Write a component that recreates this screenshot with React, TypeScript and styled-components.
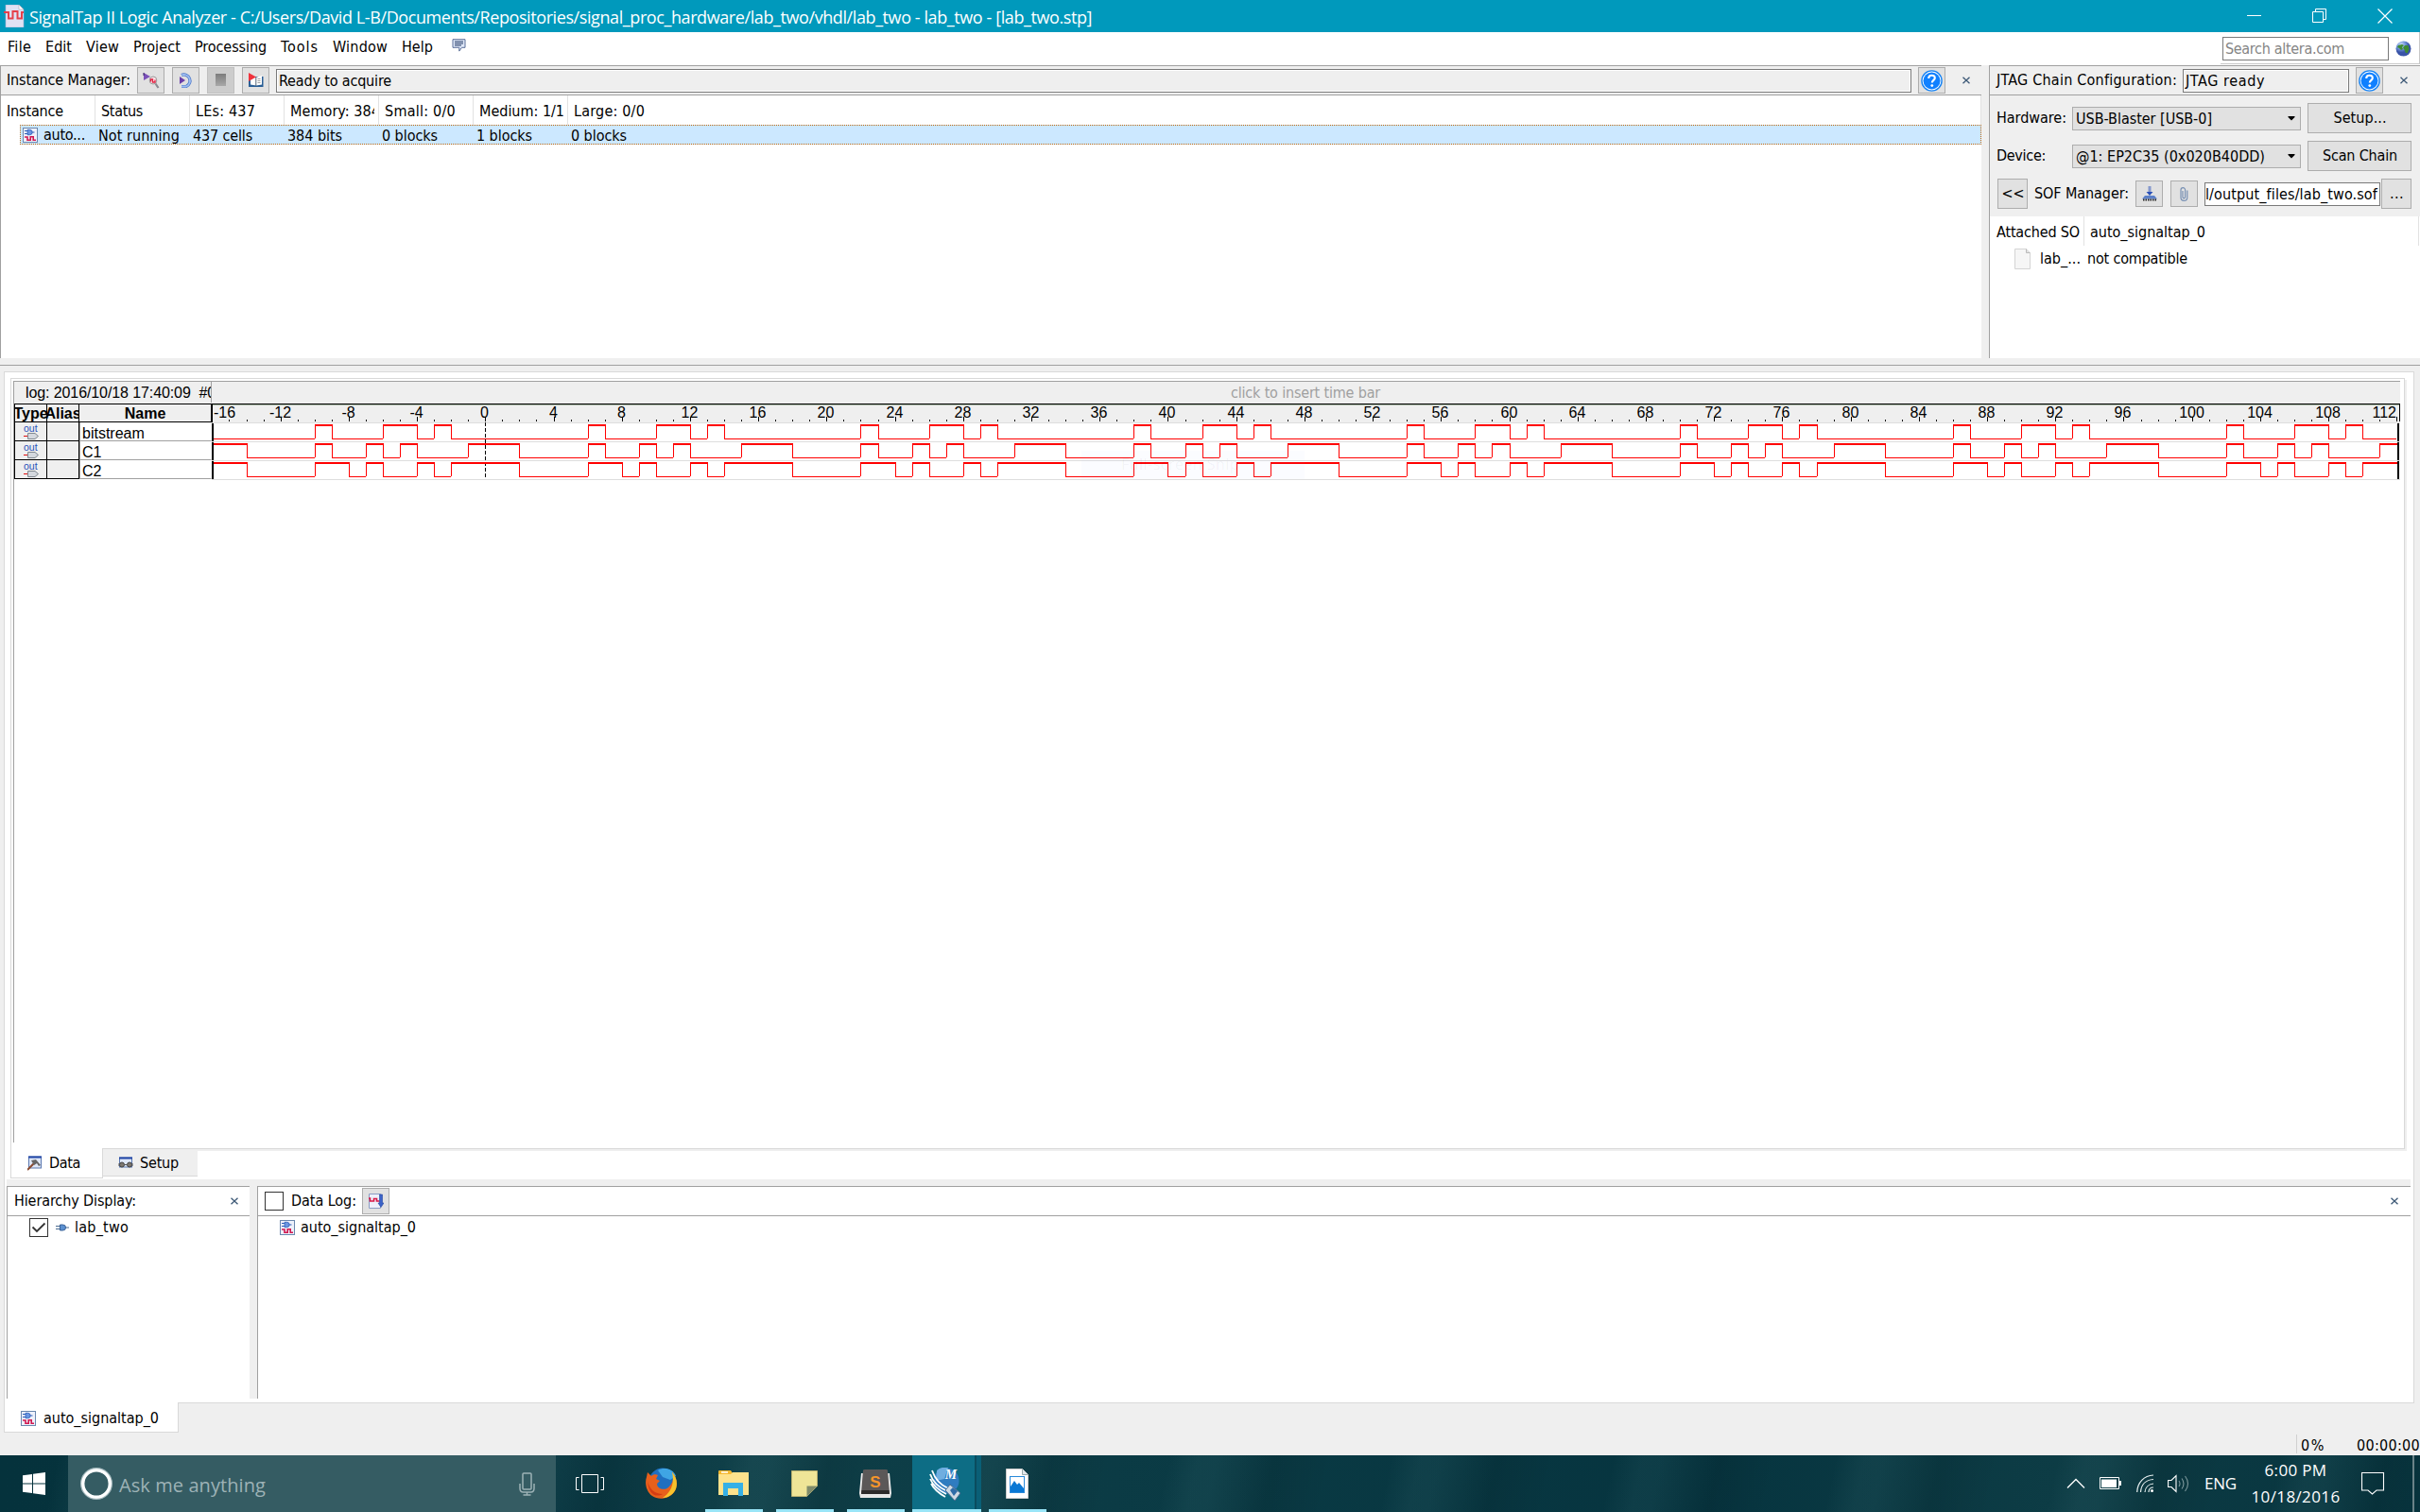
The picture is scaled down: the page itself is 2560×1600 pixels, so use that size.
import React, { useLayoutEffect, useRef, useState } from 'react';
import styled, { createGlobalStyle, css } from 'styled-components';

const ui = '"DejaVu Sans Condensed", "DejaVu Sans", sans-serif';
const segoe = '"Open Sans", "Noto Sans", sans-serif';
const arial = '"Liberation Sans", Arial, sans-serif';

const Global = createGlobalStyle`
  * { box-sizing: border-box; }
  body { margin: 0; overflow: hidden; background: #f0f0f0; }
  svg { display: block; flex: none; }
`;

const App = styled.div`
  width: 2560px; height: 1600px; display: flex; flex-direction: column;
  background: #efefef; color: #000; font: 16px/20px ${ui}; font-stretch: condensed;
  white-space: pre; overflow: hidden;
`;

/* ---------- text ---------- */
const TextSpan = styled.span<{ $w?: number; $font?: string; $size?: number; $color?: string }>`
  display: block; flex: none; line-height: 20px; white-space: pre;
  ${p => p.$w && css`width: ${p.$w}px;`}
  ${p => p.$font && css`font-family: ${p.$font}; font-stretch: normal;`}
  ${p => p.$size && css`font-size: ${p.$size}px;`}
  ${p => p.$color && css`color: ${p.$color};`}
`;

type LabelProps = { w?: number; font?: string; size?: number; color?: string; children: string };

/* A label whose tracking is spread so that the string fills the given width. */
function Label({ w, font, size, color, children }: LabelProps) {
  const inner = useRef<HTMLSpanElement>(null);
  const [track, setTrack] = useState(0);
  useLayoutEffect(() => {
    if (w && inner.current) {
      setTrack((w + 1 - inner.current.getBoundingClientRect().width) / children.length);
    }
  }, [w, children]);
  return (
    <TextSpan $w={w} $font={font} $size={size} $color={color}>
      <span ref={inner} style={{ letterSpacing: track }}>{children}</span>
    </TextSpan>
  );
}

/* ---------- title and menu ---------- */
const TitleBar = styled.header`
  height: 34px; flex: none; background: #0099bc; display: flex; align-items: center; padding: 0 29px 0 4px;
`;
const TitleText = styled.div`margin: 1px 0 0 5px; flex: 1;`;
const WindowButtons = styled.div`display: flex; gap: 54px; margin-top: -1px;`;
const MenuBar = styled.nav`
  height: 35px; flex: none; background: #fff; display: flex; align-items: flex-start; padding-left: 8px;
`;
const MenuItems = styled.div`display: flex; gap: 16px; padding-top: 6px; flex: 1;`;
const BubbleWrap = styled.div`padding-top: 1px; margin-left: 5px;`;
const SearchBar = styled.div`
  width: 211px; height: 34px; display: flex; align-items: center; gap: 7px; padding: 1px 0 0 2px;
  border-bottom: 1px solid #c8c8c8; border-right: 1px solid #c8c8c8;
`;
const SearchInput = styled.div`
  width: 176px; height: 25px; border: 1px solid #7a7a7a; display: flex; align-items: center; padding: 1px 0 0 2px;
`;

/* ---------- shared controls ---------- */
const Btn = styled.div<{ $w: number; $h: number; $dim?: boolean }>`
  width: ${p => p.$w}px; height: ${p => p.$h}px; flex: none; display: flex; align-items: center; justify-content: center;
  background: ${p => (p.$dim ? '#cccccc' : '#e1e1e1')}; border: 1px solid ${p => (p.$dim ? '#bfbfbf' : '#adadad')};
`;
const Field = styled.div<{ $w?: number; $white?: boolean }>`
  ${p => (p.$w ? css`width: ${p.$w}px; flex: none;` : css`flex: 1;`)}
  height: 25px; border: 1px solid #7a7a7a; display: flex; align-items: center; overflow: hidden;
  padding: 1px 0 0 ${p => (p.$white ? 0 : 2)}px;
  background: ${p => (p.$white ? '#fff' : '#efefef')}; box-shadow: inset 0 0 0 1px #fff;
`;
const Combo = styled.div`
  width: 242px; height: 25px; flex: none; background: #e1e1e1; border: 1px solid #adadad;
  display: flex; align-items: center; justify-content: space-between; padding: 1px 5px 0 3px;
`;
const Gap = styled.div<{ $w: number }>`width: ${p => p.$w}px; flex: none;`;
const Check = styled.div`
  width: 20px; height: 20px; flex: none; border: 1px solid #333; background: #fff;
  display: flex; align-items: center; justify-content: center;
`;
const PanelBar = styled.div<{ $white?: boolean }>`
  height: 32px; flex: none; display: flex; align-items: center;
  border-top: 1px solid #a0a0a0; border-bottom: 1px solid #a0a0a0; background: ${p => (p.$white ? '#fff' : '#efefef')};
`;

/* ---------- upper panels ---------- */
const Upper = styled.section`height: 310px; flex: none; display: flex; gap: 8px;`;
const Instances = styled.div`
  width: 2096px; background: #fff; border-left: 1px solid #a0a0a0; display: flex; flex-direction: column;
`;
const InstanceBar = styled(PanelBar)`padding-left: 6px;`;
const HeadRow = styled.div`height: 31px; display: flex; flex: none; border-right: 1px solid #e2e2e2;`;
const HeadCell = styled.div`
  width: 100px; height: 31px; flex: none; padding: 7px 5px 0 6px; border-right: 1px solid #e2e2e2;
  &:last-child { border: 0; }
`;
const Clip = styled.div`overflow: hidden; width: 89px;`;
const SelectedRow = styled.div`
  height: 21px; margin-left: 20px; background: #cce8ff; border: 1px dotted #c06a10; display: flex; align-items: center;
  padding-left: 2px;
`;
const RowCell = styled.div`width: 100px; flex: none; padding-top: 2px;`;
const AutoCell = styled.div`width: 80px; flex: none; display: flex; gap: 6px; align-items: center; padding-top: 1px;`;

const Jtag = styled.div`
  flex: 1; border-left: 1px solid #a0a0a0; display: flex; flex-direction: column; background: #efefef;
`;
const JtagBar = styled(PanelBar)`padding-left: 7px;`;
const JtagForm = styled.div`height: 128px; padding: 8px 0 0 7px; display: flex; flex-direction: column; gap: 8px; flex: none;`;
const FormRow = styled.div`height: 32px; display: flex; align-items: center;`;
const FormLabel = styled.div`width: 80px; flex: none;`;
const FileList = styled.div`flex: 1; background: #fff;`;
const FileHead = styled.div`height: 31px; display: flex; border-right: 1px solid #e2e2e2; margin-right: 1px;`;
const FileHeadCell = styled.div<{ $w: number }>`
  width: ${p => p.$w}px; padding: 7px 0 0 7px; border-right: 1px solid #e2e2e2;
  &:last-child { border: 0; padding-left: 6px; }
`;
const FileRow = styled.div`height: 28px; display: flex; align-items: center; padding-left: 26px;`;

/* ---------- document frame ---------- */
const Work = styled.main`
  height: 1132px; flex: none; border-top: 1px solid #a0a0a0; margin-top: 7px; padding: 6px 6px 0 4px;
  display: flex; flex-direction: column;
`;
const DocFrame = styled.div`
  height: 1092px; flex: none; background: #fff; border: 1px solid #d9d9d9; display: flex; flex-direction: column;
`;
const DataFrame = styled.div`
  margin: 6px 9px 0 6px; height: 816px; flex: none; border: 1px solid #d9d9d9; background: #fff;
  box-shadow: 2px 2px 0 #efefef; padding: 2px 4px 0 0;
`;
const DataView = styled.div`height: 806px; border-left: 1px solid #a0a0a0; border-top: 1px solid #a0a0a0; margin-left: 2px;`;
const LogRow = styled.div`height: 23px; background: #efefef; display: flex;`;
const LogName = styled.div`
  width: 209px; height: 22px; flex: none; border-right: 1px solid #a0a0a0; overflow: hidden; padding: 2px 0 0 12px;
`;
const LogHint = styled.div`flex: 1; display: flex; padding: 2px 0 0 1078px;`;
const WaveArea = styled.div`display: flex; position: relative;`;
const NameTable = styled.div`width: 209px; flex: none; display: flex; flex-direction: column; font-family: ${arial}; font-stretch: normal;`;
const NameHead = styled.div`
  height: 20px; display: grid; grid-template-columns: 34px 34px 1fr; border-top: 1px solid #000; border-left: 1px solid #000;
  background: #efefef; font-weight: bold;
`;
const NameHeadCell = styled.div`
  height: 19px; border-right: 1px solid #000; border-bottom: 1px solid #000; overflow: hidden;
  display: flex; justify-content: center; line-height: 19px;
`;
const NameRow = styled.div`
  height: 20px; display: grid; grid-template-columns: 34px 34px 1fr; border-left: 1px solid #000; background: #efefef;
`;
const NameCell = styled.div<{ $white?: boolean }>`
  height: 20px; border-right: 1px solid ${p => (p.$white ? '#fff' : '#000')}; border-bottom: 1px solid ${p => (p.$white ? '#a0a0a0' : '#000')};
  background: ${p => (p.$white ? '#fff' : '#efefef')}; padding-left: ${p => (p.$white ? 2 : 9)}px; line-height: 23px;
  ${p => p.$white && css`border-left: 1px solid #a0a0a0;`}
`;
const Ghost = styled.div`
  position: absolute; left: 1129px; top: 50px; width: 236px; height: 30px; background: rgba(120, 160, 255, 0.03);
  padding: 4px 0 0 42px;
`;
const DocTabs = styled.div`height: 31px; flex: none; display: flex; padding-left: 6px; margin-top: -1px; position: relative;`;
const DocTab = styled.div<{ $active?: boolean }>`
  display: flex; align-items: center; flex: none;
  ${p => p.$active
    ? css`width: 98px; height: 32px; background: #fff; border: 1px solid #d9d9d9; border-top: 0; padding: 1px 0 0 17px; gap: 8px;`
    : css`width: 100px; height: 30px; background: #efefef; border-top: 1px solid #d9d9d9; border-bottom: 1px solid #d9d9d9; padding: 1px 0 0 16px; gap: 7px;`}
`;
const Lower = styled.div`
  margin: 2px 3px 0 2px; height: 232px; flex: none; background: #efefef; padding-top: 7px; display: flex; gap: 8px;
`;
const LowerPanel = styled.div<{ $w?: number }>`
  ${p => (p.$w ? css`width: ${p.$w}px; flex: none;` : css`flex: 1;`)}
  background: #fff; border-left: 1px solid #a0a0a0; display: flex; flex-direction: column;
`;
const Spacer = styled.div`flex: 1;`;
const TreeRow = styled.div<{ $left: number }>`display: flex; align-items: center; height: 23px; padding-left: ${p => p.$left}px;`;
const PageTab = styled.div`
  width: 185px; height: 32px; margin-top: -1px; background: #fff; border: 1px solid #d9d9d9; border-top: 0; flex: none;
  display: flex; align-items: center; gap: 8px; padding: 2px 0 0 17px; position: relative;
`;
const StatusBar = styled.div`height: 22px; flex: none; display: flex; justify-content: flex-end;`;
const StatusCell = styled.div`
  width: 131px; height: 20px; border-left: 1px solid #d0d0d0; padding: 2px 0 0 4px; display: flex;
`;

/* ---------- taskbar ---------- */
const Taskbar = styled.footer`
  height: 60px; flex: none; display: flex; align-items: stretch; color: #fff;
  background:
    repeating-linear-gradient(102deg, rgba(255,255,255,0) 0 60px, rgba(160,220,220,0.05) 90px 110px, rgba(0,0,0,0.08) 170px, rgba(255,255,255,0) 230px),
    linear-gradient(90deg, #05323c 0%, #06343f 22%, #0f3f48 30%, #0a3a44 50%, #06343f 70%, #0d3c45 85%, #07343e 100%);
`;
const Start = styled.div`width: 72px; display: flex; padding: 18px 0 0 24px;`;
const Cortana = styled.div`
  width: 516px; background: #355c63; display: flex; align-items: center; padding: 0 22px 0 12px;
`;
const CortanaText = styled.div`flex: 1; padding: 3px 0 0 6px;`;
const TaskView = styled.div`width: 83px; display: flex; padding: 20px 0 0 21px;`;
const Task = styled.div<{ $w: number; $gap?: number; $open?: boolean; $active?: boolean }>`
  width: ${p => p.$w}px; margin-right: ${p => p.$gap || 0}px; flex: none;
  display: flex; align-items: center; justify-content: center; padding-right: 2px;
  ${p => p.$open && css`border-bottom: 3px solid #99e5f7; padding-top: 3px;`}
  ${p => p.$active && css`
    background: linear-gradient(90deg, #0d6d85 0 66px, #0a4c5e 66px 68px, #0a5f76 68px); padding-right: 4px;
  `}
`;
const Tray = styled.div`margin-left: auto; display: flex; align-items: center;`;
const Clock = styled.div`width: 94px; height: 60px; display: flex; flex-direction: column; align-items: center; gap: 8px; padding-top: 6px;`;
const ShowDesktop = styled.div`width: 8px; height: 60px; border-left: 2px solid #6a8288; margin-left: 29px;`;

/* ---------- icons ---------- */
const CloseX = () => (
  <svg width="8" height="8" viewBox="0 0 8 8"><path d="M.5.8 7.5 7.2M7.5.8.5 7.2" stroke="#3c5876" strokeWidth="1.3" /></svg>
);
const HelpIcon = () => (
  <svg width="23" height="23" viewBox="0 0 23 23">
    <circle cx="11.5" cy="11.5" r="10.6" fill="#fff" stroke="#1583f5" strokeWidth="1.4" />
    <circle cx="11.5" cy="11.5" r="9" fill="#0f80ff" />
    <path d="M8.200 9c0-4.400 6.800-4.200 6.600-.4-.1 2.200-3 2.400-3 5" fill="none" stroke="#fff" strokeWidth="2.100" />
    <circle cx="11.800" cy="16.600" r="1.400" fill="#fff" />
  </svg>
);
const AppIcon = () => (
  <svg width="22" height="24" viewBox="0 0 22 24">
    <path d="M2 0h14l5 5v19H2z" fill="#dfe2f4" stroke="#aab0d0" strokeWidth=".6" /><path d="M16 0v5h5z" fill="#fff" stroke="#99a" strokeWidth=".5" />
    <path d="M0 8h5v6.500h4.500V7h5v7.500H19V8h2" fill="none" stroke="#e5404a" strokeWidth="2" />
  </svg>
);
const InstanceIcon = () => (
  <svg width="16" height="16" viewBox="0 0 16 16">
    <rect x=".5" y=".5" width="15" height="15" fill="#eef1fb" stroke="#6a87ae" />
    <path d="M2 3.500h3M2 6.500h3M9.500 5h3" stroke="#2c5db8" /><path d="M5 2.300h2.500a2.700 2.700 0 0 1 0 5.400H5z" fill="#6b96e2" stroke="#2c5db8" strokeWidth=".8" />
    <path d="M2 10h3v3.200h3.200V9.800h3v3.400H14" fill="none" stroke="#d01850" strokeWidth="1.600" />
  </svg>
);
const RunIcon = () => (
  <svg width="18" height="18" viewBox="0 0 18 18">
    <path d="M1 1l7 4-7 4z" fill="#7a50b8" /><path d="M1 1v3" stroke="#302060" />
    <ellipse cx="11" cy="9" rx="3.800" ry="4" fill="#fbe6ea" stroke="#999" /><path d="M8.500 10.500V8h2v3h2.500V8.500" fill="none" stroke="#e02040" strokeWidth="1.300" />
    <path d="M13.500 12.500l3 4.500" stroke="#8a8a92" strokeWidth="2.200" />
  </svg>
);
const LoopIcon = () => (
  <svg width="18" height="18" viewBox="0 0 18 18">
    <path d="M4 3.500A6.200 6.200 0 1 1 9 15.500H4" fill="none" stroke="#4a76c8" strokeWidth="3.200" />
    <path d="M4 3.500A6.200 6.200 0 1 1 9 15.500H4" fill="none" stroke="#9dbcf0" strokeWidth="1.800" />
    <path d="M2 5l6 4-6 4z" fill="#6a3ea8" />
  </svg>
);
const StopIcon = () => <svg width="12" height="14"><defs><linearGradient id="st" x2="0" y2="1"><stop stopColor="#7c7c7c" /><stop offset="1" stopColor="#a8a8a8" /></linearGradient></defs><rect width="11" height="13" fill="url(#st)" /></svg>;
const BookIcon = () => (
  <svg width="17" height="16" viewBox="0 0 17 16">
    <path d="M1 4h15.500v11H1z" fill="#2b5f96" /><path d="M3 4l5.500 1L15 3v9.500l-6 1-6-1z" fill="#fff" />
    <path d="M8.800 5v9" stroke="#567" /><path d="M10.500 6.500h3M10.500 8.500h3M10.500 10.500h3" stroke="#888" strokeWidth=".8" />
    <path d="M1 0l8 4.500-8 4.500z" fill="#f0323c" />
  </svg>
);
const BubbleIcon = () => (
  <svg width="15" height="14" viewBox="0 0 15 14">
    <path d="M1 .7h13v8.600h-3.500l-2.700 3.800V9.300H1z" fill="#dfe8f8" stroke="#5a6f98" /><path d="M3 3h9M3 5h9M3 7h7" stroke="#243a66" />
  </svg>
);
const GlobeIcon = () => (
  <svg width="17" height="17" viewBox="0 0 17 17">
    <defs><radialGradient id="gl" cx=".35" cy=".25"><stop stopColor="#cfe0fa" /><stop offset=".6" stopColor="#6c90d8" /><stop offset="1" stopColor="#3a54a8" /></radialGradient></defs>
    <circle cx="8.500" cy="8.500" r="8" fill="url(#gl)" /><path d="M3 5l4-1 2 1-2 2 1 2-2 1-2-2-2-1zM10 5l3.500 0 1 4-2 4.500-2-1-1-3-1.500-2z" fill="#3f8c32" />
  </svg>
);
const DownloadIcon = () => (
  <svg width="16" height="16" viewBox="0 0 16 16">
    <path d="M6.500 1h3M6.500 3h3M6.500 5h3" stroke="#2a50b8" /><path d="M4.500 6h7L8 10z" fill="#2a50b8" />
    <path d="M3 10h10l3 3.500H0z" fill="#5c80c8" /><path d="M1 14.500h14" stroke="#222" strokeWidth="2" strokeDasharray="1.500 1" />
  </svg>
);
const ClipIcon = () => (
  <svg width="9" height="15" viewBox="0 0 9 15"><path d="M3 4v6.500a1.300 1.300 0 0 0 2.600 0V3a2 2 0 0 0-4.600 0v8a3.200 3.200 0 0 0 6.800 0V3.500" fill="none" stroke="#7890b4" strokeWidth="1.200" /></svg>
);
const FileIcon = () => (
  <svg width="17" height="22" viewBox="0 0 17 22"><path d="M.5.5h12l4 4v17H.5z" fill="#f6f6f6" stroke="#d4d4d4" /><path d="M12.500.5v4h4" fill="#e4e4e4" stroke="#bbb" /></svg>
);
const Arrow = () => <svg width="8" height="5" viewBox="0 0 8 5"><path d="M.5 0h7v1L4 4.500.5 1z" fill="#000" /></svg>;
const OutIcon = () => (
  <svg width="16" height="19" viewBox="0 0 16 19">
    <text x="0" y="10" fontFamily={arial} fontSize="10.500" fill="#2a50b8">out</text>
    <path d="M0 14.500h4" stroke="#e01010" /><path d="M4.500 11.500h7.500l3.500 3-3.500 3H4.500z" fill="#d4d8de" stroke="#808890" />
  </svg>
);
const HammerIcon = () => (
  <svg width="15" height="16" viewBox="0 0 15 16">
    <rect x="1.500" y="1" width="13" height="12" fill="#dfe8f8" stroke="#5a78b0" /><path d="M1 1.500h14" stroke="#2448a8" strokeWidth="2" />
    <path d="M0 15l7-7" stroke="#8a4a30" strokeWidth="2" /><path d="M4 5l5-1 5 6-2 1-2-3-3 2z" fill="#666" />
  </svg>
);
const SetupIcon = () => (
  <svg width="16" height="13" viewBox="0 0 16 13">
    <rect x="1.500" y="1" width="13" height="10" fill="#dfe8f8" stroke="#5a78b0" /><path d="M1 1.500h14" stroke="#2448a8" strokeWidth="2" />
    <circle cx="4" cy="8.500" r="2.500" fill="#7e7870" stroke="#444" /><circle cx="12" cy="8.500" r="2.500" fill="#7e7870" stroke="#444" /><path d="M6.500 8.500h3M0 7v3M16 7v3" stroke="#555" />
  </svg>
);
const PlugIcon = () => (
  <svg width="14" height="8" viewBox="0 0 14 8"><path d="M0 2.500h5M0 5.500h5M10 4h4" stroke="#4a6a90" /><path d="M4.500 1h3a3 3 0 0 1 0 6h-3z" fill="#5b90d0" stroke="#3a6298" /></svg>
);
const DataLogIcon = () => (
  <svg width="16" height="16" viewBox="0 0 16 16">
    <path d="M.5.5h12v15H.5z" fill="#eef0fb" stroke="#8a9cc4" /><path d="M0 5h1.500v3h4V5.500h3V8h3" fill="none" stroke="#d81848" strokeWidth="1.600" />
    <path d="M11.500 1h3v9H16l-3 4.500L10 10h1.500z" fill="#3a62c8" stroke="#2545a0" strokeWidth=".6" />
  </svg>
);
const FirefoxIcon = () => (
  <svg width="34" height="34" viewBox="0 0 34 34">
    <circle cx="18" cy="15" r="14.500" fill="#1f6fc0" /><path d="M13 3c6-4 16-2 19 6l-6 4-8-3z" fill="#3fa5e4" />
    <path d="M28 5c5 5 7 14 2 21S14 35 7 30-1 15 1 10l1-5 4 4c2-2 5-2 7-1l-2 4 4 2-3 3c0 6 9 8 13 3 4-4 5-9 4-15z" fill="#e8601c" />
    <path d="M28 5c5 5 7 14 2 21-4 5-9 6-12 6 8-5 13-14 10-27z" fill="#f8c22c" /><path d="M2 14c2 9 8 14 16 14-7 4-15 1-16-14z" fill="#d43c14" />
  </svg>
);
const FolderIcon = () => (
  <svg width="32" height="28" viewBox="0 0 32 28">
    <path d="M0 1q0-1 1-1h12l2 3v3H0z" fill="#f5b82e" /><path d="M3 2h7" stroke="#fff" strokeWidth="1.500" /><path d="M0 4h13l2-2h17v24H0z" fill="#fde28c" />
    <path d="M5 27V13h21v14h-5v-8H10v8z" fill="#36b0e6" />
  </svg>
);
const NoteIcon = () => (
  <svg width="28" height="28" viewBox="0 0 28 28"><path d="M.5.5h27v16l-11 11H.5z" fill="#efe597" stroke="#b8b070" /><path d="M16.500 27.500v-11h11z" fill="#7f8b6a" /></svg>
);
const SublimeIcon = () => (
  <svg width="34" height="30" viewBox="0 0 34 30">
    <path d="M2 4l30 0 2 21-1 5H1l-1-5z" fill="#e8e8e8" /><path d="M4 1q0-1 2-1h22q2 0 2 1l2 24H2z" fill="#5b5858" /><path d="M2.500 22h29l.5 4H2z" fill="#2c2a2a" />
    <text x="17" y="18.500" textAnchor="middle" fontFamily={arial} fontWeight="bold" fontSize="17" fill="#f7962a">S</text>
  </svg>
);
const QuartusIcon = () => (
  <svg width="34" height="35" viewBox="0 0 34 35">
    <circle cx="18" cy="14" r="13.500" fill="#2f7cc0" /><path d="M8 3a14 14 0 0 1 12-3l-4 12-9 2z" fill="#6faee0" />
    <path d="M1 7c3 9 9 14 18 18M1 12c3 7 9 12 17 16M2 17c3 6 8 10 15 14M3 3c3 9 8 15 17 19" fill="none" stroke="#fff" strokeWidth="1.800" />
    <path d="M17 24l5-6 11 9-6 8z" fill="#d0dae4" stroke="#4a6c90" /><path d="M22 24l3-3 5 4-4 5z" fill="#2f6ca8" />
    <text x="23" y="12" textAnchor="middle" fontFamily="Liberation Serif" fontStyle="italic" fontWeight="bold" fontSize="14" fill="#fff">M</text>
  </svg>
);
const PhotoIcon = () => (
  <svg width="24" height="32" viewBox="0 0 24 32"><path d="M.5.5h17l6 6v25H.5z" fill="#fff" stroke="#ccc" /><path d="M17.500.5v6h6" fill="#e0e6ea" stroke="#9aa" />
    <rect x="4.500" y="8.500" width="15" height="17" fill="#fff" stroke="#2a8ada" /><path d="M5 25v-6l4-6 3 4 2-2 5 6v4z" fill="#0a78d4" /></svg>
);

/* ---------- waveforms ---------- */
const UNIT = 18.054;
const timeX = (t: number) => Math.round(289.3 + t * UNIT);
const PATTERNS: [string, [number, number][]][] = [
  ['bitstream', [[6, 7], [10, 12], [13, 14]]],
  ['C1', [[6, 7], [9, 10], [11, 12], [15, 18]]],
  ['C2', [[6, 8], [9, 10], [12, 13], [14, 18]]],
];
function wavePaths(spans: [number, number][], top: number) {
  let high = '', edge = '', low = '', last = -16;
  for (let base = -32; base <= 96; base += 16) {
    spans.forEach(([a, b]) => {
      const s = Math.max(-16, base + a), e = Math.min(112, base + b);
      if (e <= s) return;
      if (s > last) low += `M${timeX(last)} ${top + 15.5}H${timeX(s)}`;
      high += `M${timeX(s)} ${top + 1}H${timeX(e) + 1}`;
      if (s > -16) edge += `M${timeX(s) + 0.5} ${top}V${top + 15}`;
      if (e < 112) edge += `M${timeX(e) + 0.5} ${top}V${top + 16}`;
      last = e;
    });
  }
  if (last < 112) low += `M${timeX(last)} ${top + 15.5}H${timeX(112)}`;
  return { high, thin: edge + low };
}
const ticks = Array.from({ length: 129 }, (_, i) => i - 16);

function Waves() {
  return (
    <svg width="2315" height="82" viewBox="0 0 2315 82" shapeRendering="crispEdges">
      <rect width="2315" height="20" fill="#efefef" />
      <path d="M0 .5H2315M2314.500 0V19M.5 0V20" stroke="#000" />
      <path d="M1 1.500H2314" stroke="#a8b8a4" />
      {ticks.map(t => (
        <path key={t} d={`M${timeX(t) + 0.5} ${t % 4 === 0 ? 14 : 17}V19`} stroke="#000" />
      ))}
      <path d="M0 20.500H2315M0 40.500H2315M0 60.500H2315M0 80.500H2315" stroke="#dedede" />
      <g fontFamily={arial} fontSize="16">
        {ticks.filter(t => t % 4 === 0).map(t => (
          <text key={t} x={t === -16 ? 2 : t === 112 ? 2311 : timeX(t) - 0.5} y="15"
            textAnchor={t === -16 ? 'start' : t === 112 ? 'end' : 'middle'}>{t}</text>
        ))}
      </g>
      <path d={`M${timeX(0) + 0.5} 20V80`} stroke="#000" strokeDasharray="4 2" />
      {PATTERNS.map(([name, spans], i) => {
        const w = wavePaths(spans, 22 + i * 20);
        return (
          <g key={name} fill="none" stroke="#ff0000">
            <path d={w.high} strokeWidth="2" /><path d={w.thin} />
          </g>
        );
      })}
      <path d="M1 21V40M1 41V60M1 61V80M2313 21V40M2313 41V60M2313 61V80" stroke="#000" strokeWidth="2" />
    </svg>
  );
}

const MENU: [string, number][] = [['File', 24], ['Edit', 27], ['View', 34], ['Project', 49], ['Processing', 75], ['Tools', 39], ['Window', 57], ['Help', 32]];
const HEADS: [string, number][] = [['Instance', 59], ['Status', 43], ['LEs: 437', 62], ['Memory: 384', 94], ['Small: 0/0', 74], ['Medium: 1/1', 89], ['Large: 0/0', 74]];
const CELLS: [string, number][] = [['Not running', 85], ['437 cells', 62], ['384 bits', 57], ['0 blocks', 58], ['1 blocks', 58], ['0 blocks', 58]];

export default function SignalTap() {
  return (
    <App>
      <Global />
      <TitleBar>
        <AppIcon />
        <TitleText><Label w={1123} font={segoe} size={18} color="#fff">SignalTap II Logic Analyzer - C:/Users/David L-B/Documents/Repositories/signal_proc_hardware/lab_two/vhdl/lab_two - lab_two - [lab_two.stp]</Label></TitleText>
        <WindowButtons>
          <svg width="15" height="15"><path d="M0 7.500H15" stroke="#fff" /></svg>
          <svg width="15" height="15"><path d="M.5 3.500h11v11H.5zM3.500 3V.5h11v11H12" fill="none" stroke="#fff" /></svg>
          <svg width="16" height="16"><path d="M.5.5l15 15M15.500.5l-15 15" stroke="#fff" strokeWidth="1.200" /></svg>
        </WindowButtons>
      </TitleBar>
      <MenuBar>
        <MenuItems>
          {MENU.map(([name, w]) => <Label key={name} w={w}>{name}</Label>)}
          <BubbleWrap><BubbleIcon /></BubbleWrap>
        </MenuItems>
        <SearchBar>
          <SearchInput><Label w={125} color="#858585">Search altera.com</Label></SearchInput>
          <GlobeIcon />
        </SearchBar>
      </MenuBar>

      <Upper>
        <Instances>
          <InstanceBar>
            <Label w={130}>Instance Manager:</Label><Gap $w={8} />
            <Btn $w={29} $h={28}><RunIcon /></Btn><Gap $w={8} />
            <Btn $w={29} $h={28}><LoopIcon /></Btn><Gap $w={8} />
            <Btn $w={29} $h={28} $dim><StopIcon /></Btn><Gap $w={8} />
            <Btn $w={29} $h={28}><BookIcon /></Btn><Gap $w={7} />
            <Field><Label w={118}>Ready to acquire</Label></Field><Gap $w={7} />
            <Btn $w={29} $h={28}><HelpIcon /></Btn><Gap $w={18} /><CloseX /><Gap $w={12} />
          </InstanceBar>
          <HeadRow>
            {HEADS.map(([t, w]) => <HeadCell key={t}><Clip><Label w={w}>{t}</Label></Clip></HeadCell>)}
          </HeadRow>
          <SelectedRow>
            <AutoCell><InstanceIcon /><Label w={43}>auto...</Label></AutoCell>
            {CELLS.map(([t, w], i) => <RowCell key={i}><Label w={w}>{t}</Label></RowCell>)}
          </SelectedRow>
        </Instances>
        <Jtag>
          <JtagBar>
            <Label w={190}>JTAG Chain Configuration:</Label><Gap $w={7} />
            <Field $w={176}><Label w={83}>JTAG ready</Label></Field><Gap $w={7} />
            <Btn $w={29} $h={28}><HelpIcon /></Btn><Gap $w={18} /><CloseX />
          </JtagBar>
          <JtagForm>
            <FormRow>
              <FormLabel><Label w={73}>Hardware:</Label></FormLabel>
              <Combo><Label w={143}>USB-Blaster [USB-0]</Label><Arrow /></Combo><Gap $w={7} />
              <Btn $w={110} $h={32}><Label w={55}>Setup...</Label></Btn>
            </FormRow>
            <FormRow>
              <FormLabel><Label w={51}>Device:</Label></FormLabel>
              <Combo><Label w={199}>@1: EP2C35 (0x020B40DD)</Label><Arrow /></Combo><Gap $w={7} />
              <Btn $w={110} $h={32}><Label w={78}>Scan Chain</Label></Btn>
            </FormRow>
            <FormRow>
              <Gap $w={1} /><Btn $w={32} $h={32}><Label w={23}>{'<<'}</Label></Btn><Gap $w={7} />
              <Label w={99}>SOF Manager:</Label><Gap $w={8} />
              <Btn $w={29} $h={28}><DownloadIcon /></Btn><Gap $w={8} />
              <Btn $w={29} $h={28}><ClipIcon /></Btn><Gap $w={7} />
              <Field $w={186} $white><Label w={181}>l/output_files/lab_two.sof</Label></Field><Gap $w={1} />
              <Btn $w={32} $h={32}><Label w={14}>...</Label></Btn>
            </FormRow>
          </JtagForm>
          <FileList>
            <FileHead>
              <FileHeadCell $w={100}><Label w={87}>Attached SO</Label></FileHeadCell>
              <FileHeadCell $w={300}><Label w={121}>auto_signaltap_0</Label></FileHeadCell>
            </FileHead>
            <FileRow><FileIcon /><Gap $w={10} /><Label w={42}>lab_...</Label><Gap $w={8} /><Label w={105}>not compatible</Label></FileRow>
          </FileList>
        </Jtag>
      </Upper>

      <Work>
        <DocFrame>
          <DataFrame>
            <DataView>
              <LogRow>
                <LogName><Label w={200} font={arial}>log: 2016/10/18 17:40:09  #0</Label></LogName>
                <LogHint><Label w={157} color="#a0a0a0">click to insert time bar</Label></LogHint>
              </LogRow>
              <WaveArea>
                <NameTable>
                  <NameHead>
                    <NameHeadCell>Type</NameHeadCell><NameHeadCell>Alias</NameHeadCell><NameHeadCell>Name</NameHeadCell>
                  </NameHead>
                  {PATTERNS.map(([name]) => (
                    <NameRow key={name}><NameCell><OutIcon /></NameCell><NameCell /><NameCell $white>{name}</NameCell></NameRow>
                  ))}
                </NameTable>
                <Waves />
                <Ghost><Label w={124} font={segoe} color="rgba(0,0,40,0.05)">Full-screen Snip</Label></Ghost>
              </WaveArea>
            </DataView>
          </DataFrame>
          <DocTabs>
            <DocTab $active><HammerIcon /><Label w={32}>Data</Label></DocTab>
            <DocTab><SetupIcon /><Label w={40}>Setup</Label></DocTab>
          </DocTabs>
          <Lower>
            <LowerPanel $w={257}>
              <PanelBar $white>
                <Gap $w={7} /><Label w={128}>Hierarchy Display:</Label><Spacer /><CloseX /><Gap $w={12} />
              </PanelBar>
              <TreeRow $left={23}>
                <Check><svg width="16" height="14" viewBox="0 0 16 14"><path d="M1.500 6.500l4.500 4.500L14.500 2.500" fill="none" stroke="#333" strokeWidth="1.800" /></svg></Check>
                <Gap $w={8} /><PlugIcon /><Gap $w={6} /><Label w={56}>lab_two</Label>
              </TreeRow>
            </LowerPanel>
            <LowerPanel>
              <PanelBar $white>
                <Gap $w={7} /><Check /><Gap $w={8} /><Label w={68}>Data Log:</Label><Gap $w={7} />
                <Btn $w={29} $h={28}><DataLogIcon /></Btn><Spacer /><CloseX /><Gap $w={13} />
              </PanelBar>
              <TreeRow $left={23}><InstanceIcon /><Gap $w={6} /><Label w={121}>auto_signaltap_0</Label></TreeRow>
            </LowerPanel>
          </Lower>
        </DocFrame>
        <PageTab><InstanceIcon /><Label w={121}>auto_signaltap_0</Label></PageTab>
      </Work>
      <StatusBar>
        <StatusCell><Label w={25}>0%</Label><Gap $w={34} /><Label w={66}>00:00:00</Label></StatusCell>
      </StatusBar>

      <Taskbar>
        <Start>
          <svg width="24" height="24" viewBox="0 0 24 24" fill="#fff"><path d="M0 3.300l10-1.400v9.600H0zM11 1.700 24 0v11.500H11zM0 12.500h10v9.600L0 20.700zM11 12.500h13V24l-13-1.700z" /></svg>
        </Start>
        <Cortana>
          <svg width="36" height="36" viewBox="0 0 36 36"><circle cx="18" cy="18" r="15" fill="none" stroke="#a8bcc0" strokeWidth="4" /><circle cx="18" cy="18" r="14.200" fill="none" stroke="#fff" strokeWidth="3.200" /></svg>
          <CortanaText><Label w={154} font={segoe} size={20} color="#9db2b6">Ask me anything</Label></CortanaText>
          <svg width="17" height="25" viewBox="0 0 17 25" fill="none" stroke="#9db2b6" strokeWidth="1.500"><rect x="4" y="1" width="9" height="17" rx="1" /><path d="M1 12v5q0 4 3.500 4h8q3.500 0 3.500-4v-5M8.500 21v3M4.500 24h8" /></svg>
        </Cortana>
        <TaskView>
          <svg width="31" height="20" viewBox="0 0 31 20" fill="none" stroke="#fff"><path d="M6.500.5h17v19h-17zM3.500 3.500h-3v13h3M26.500 3.500h3v13h-3" /></svg>
        </TaskView>
        <Task $w={60} $gap={15}><FirefoxIcon /></Task>
        <Task $w={61} $gap={14} $open><FolderIcon /></Task>
        <Task $w={61} $gap={14} $open><NoteIcon /></Task>
        <Task $w={61} $gap={8} $open><SublimeIcon /></Task>
        <Task $w={73} $gap={8} $open $active><QuartusIcon /></Task>
        <Task $w={61} $open><PhotoIcon /></Task>
        <Tray>
          <svg width="20" height="12"><path d="M1 10.500l9-9 9 9" fill="none" stroke="#fff" strokeWidth="1.300" /></svg><Gap $w={15} />
          <svg width="23" height="14" viewBox="0 0 23 14"><path d="M.5.5h20v12H.5z" fill="none" stroke="#fff" /><path d="M2 2.500h16v8.500H2z" fill="#fff" /><path d="M22 4v5" stroke="#fff" strokeWidth="2" /></svg><Gap $w={16} />
          <svg width="20" height="20" viewBox="0 0 20 20" fill="none" stroke="#e8f0f0" strokeWidth="1.200"><path d="M.7 19C1 9 8 1.500 18 1M4.500 19C5 11 10 6 18 5.500M9 19c.3-5 4-8.500 9-9M13 19c0-3 2-5 5-5" /><circle cx="16.500" cy="17.500" r="1.500" fill="#fff" stroke="none" /></svg><Gap $w={13} />
          <svg width="24" height="20" viewBox="0 0 24 20" fill="none" stroke="#fff" strokeWidth="1.100"><path d="M.6 6.500H4l5-5v17l-5-5H.6z" /><path d="M12 7q2 3 0 6M15 4.500q4 5.500 0 11M18.500 2q6 8 0 16" stroke="#7d989c" /></svg><Gap $w={15} />
          <Label w={33} font={segoe} size={17}>ENG</Label><Gap $w={16} />
          <Clock>
            <Label w={65} font={segoe} size={17}>6:00 PM</Label>
            <Label w={93} font={segoe} size={17}>10/18/2016</Label>
          </Clock><Gap $w={23} />
          <svg width="25" height="25" viewBox="0 0 25 25"><path d="M.5.5h23v18.500h-7.500l-4.500 4-4.500-4H.5z" fill="none" stroke="#fff" strokeWidth="1.100" /></svg>
          <ShowDesktop />
        </Tray>
      </Taskbar>
    </App>
  );
}
